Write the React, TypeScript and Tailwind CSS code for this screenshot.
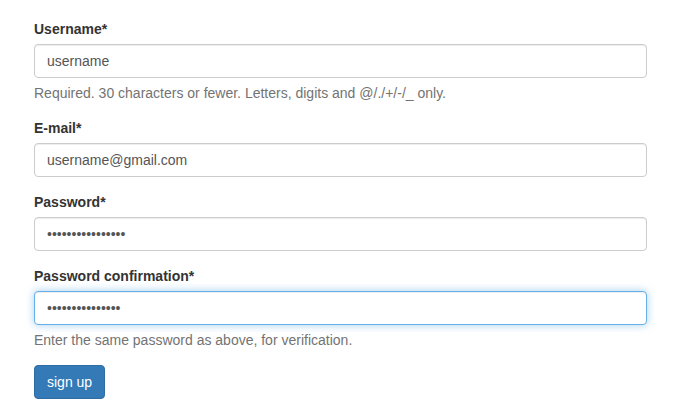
import React from 'react';

const inputBase =
  'block w-full h-[34px] px-3 py-1.5 text-[14px] leading-5 text-[#555] bg-white rounded-[4px] border outline-none';

function Field({
  label,
  type = 'text',
  value,
  help,
  focused = false,
}: {
  label: string;
  type?: string;
  value: string;
  help?: string;
  focused?: boolean;
}) {
  return (
    <div className="mb-[15px]">
      <label className="inline-block mb-[5px] font-bold text-[#333] leading-5">{label}</label>
      <input
        type={type}
        defaultValue={value}
        readOnly
        className={
          inputBase +
          (focused
            ? ' border-[#66afe9] shadow-[inset_0_1px_1px_rgba(0,0,0,0.075),0_0_8px_rgba(102,175,233,0.6)]'
            : ' border-[#ccc] shadow-[inset_0_1px_1px_rgba(0,0,0,0.075)]')
        }
      />
      {help && <p className="mt-[5px] mb-[10px] text-[#737373] leading-5">{help}</p>}
    </div>
  );
}

export default function App() {
  return (
    <div
      className="w-[685px] h-[420px] bg-white pt-[19px] pl-[34px] text-[14px] text-[#333]"
      style={{ fontFamily: '"Liberation Sans", Arial, sans-serif' }}
    >
      <form className="w-[613px]" onSubmit={e => e.preventDefault()}>
        <Field
          label="Username*"
          value="username"
          help="Required. 30 characters or fewer. Letters, digits and @/./+/-/_ only."
        />
        <Field label="E-mail*" value="username@gmail.com" />
        <Field label="Password*" type="password" value="passwordpassword" />
        <Field
          label="Password confirmation*"
          type="password"
          value="passwordpasswor"
          help="Enter the same password as above, for verification."
          focused
        />
        <button
          type="submit"
          className="h-[34px] px-3 py-1.5 text-[14px] leading-5 text-white bg-[#337ab7] border border-[#2e6da4] rounded-[4px]"
        >
          sign up
        </button>
      </form>
    </div>
  );
}
